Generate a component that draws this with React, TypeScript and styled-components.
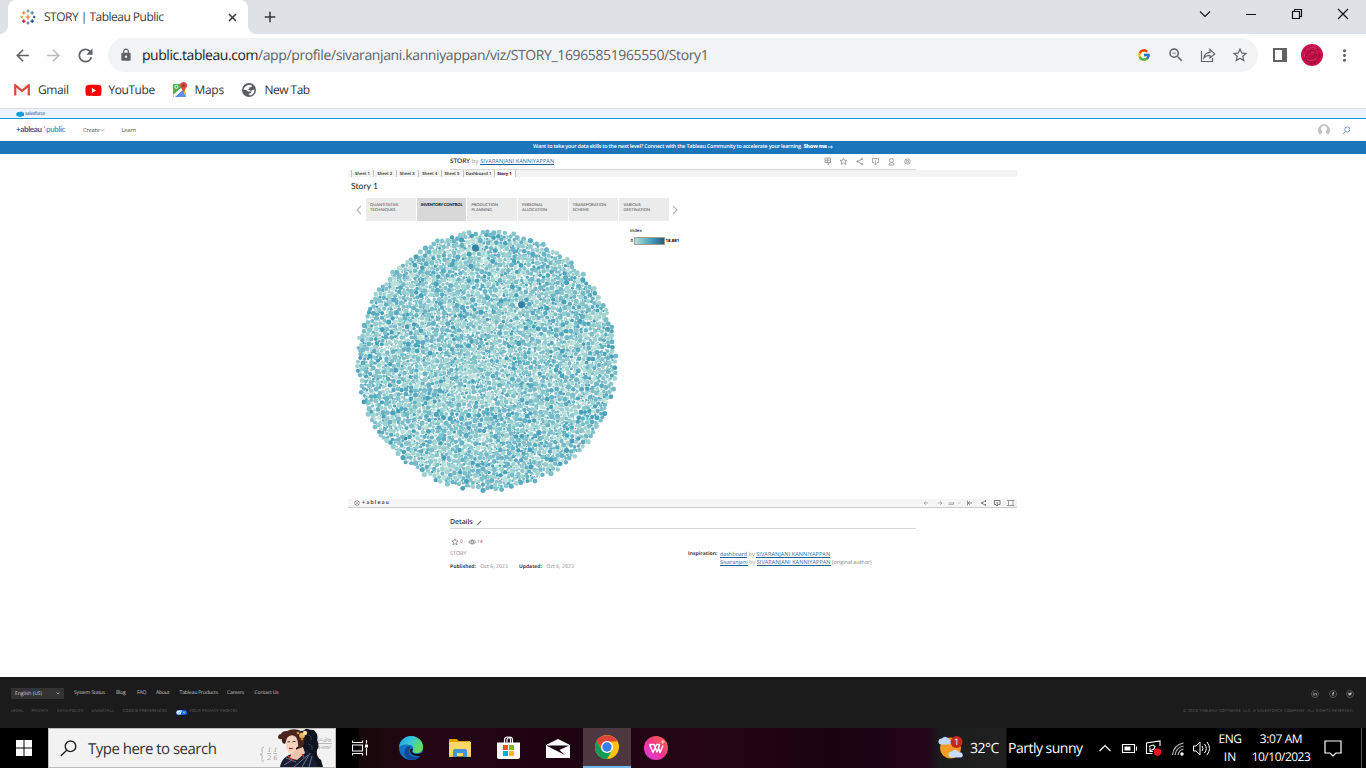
import React from "react";
import styled, { createGlobalStyle } from "styled-components";
import { MdArrowBack, MdArrowForward, MdRefresh, MdLock, MdZoomOut, MdStarBorder, MdAdd, MdMoreVert } from "react-icons/md";
import { FcGoogle } from "react-icons/fc";
import { FaYoutube, FaLinkedinIn, FaFacebookF, FaTwitter } from "react-icons/fa";

const Global = createGlobalStyle`
  * { box-sizing: border-box; }
  body { margin: 0; background: #fff; overflow: hidden; }
  svg { display: block; flex: none; }
`;

const Screen = styled.div`
  width: 1366px;
  height: 768px;
  display: flex;
  flex-direction: column;
  overflow: hidden;
  background: #fff;
  font-family: "Open Sans", "Noto Sans", sans-serif;
  text-rendering: geometricPrecision;
`;

type TextProps = { $size: number; $color?: string; $weight?: number; $track?: number; $left?: number; $width?: number; $font?: string };
const Text = styled.span<TextProps>`
  font-size: ${(p) => p.$size}px;
  color: ${(p) => p.$color ?? "#333"};
  font-weight: ${(p) => p.$weight ?? 400};
  letter-spacing: ${(p) => p.$track ?? 0}px;
  margin-left: ${(p) => p.$left ?? 0}px;
  width: ${(p) => (p.$width ? `${p.$width}px` : "auto")};
  ${(p) => (p.$font ? `font-family: "${p.$font}", sans-serif;` : "")}
  line-height: 1.2;
  white-space: nowrap;
  flex: none;
`;

const Spacer = styled.div<{ $w?: number }>`
  ${(p) => (p.$w !== undefined ? `width: ${p.$w}px; flex: none;` : "flex: 1;")}
`;

/* ---------- browser ---------- */

const TabStrip = styled.div`
  height: 34px;
  flex: none;
  display: flex;
  align-items: center;
  background: #dee1e6;
  padding-left: 8px;
`;
const Tab = styled.div`
  width: 240px;
  height: 34px;
  display: flex;
  align-items: center;
  padding: 0 11px 0 12px;
  background: #fff;
  border-radius: 8px 8px 0 0;
`;
const TabFoot = styled.div<{ $side: "left" | "right" }>`
  width: 8px;
  height: 8px;
  align-self: flex-end;
  flex: none;
  margin-left: ${(p) => (p.$side === "left" ? "-8px" : "0")};
  background: radial-gradient(circle at ${(p) => (p.$side === "left" ? "0 0" : "100% 0")}, #dee1e6 7.6px, #fff 8.2px);
`;
const Toolbar = styled.div`
  height: 42px;
  flex: none;
  display: flex;
  align-items: center;
  color: #5f6368;
  padding-left: 13px;
`;
const Address = styled.div`
  width: 1150px;
  height: 34px;
  border-radius: 17px;
  background: #f1f3f4;
  display: flex;
  align-items: center;
  padding-left: 10px;
`;
const Url = styled.div`
  display: flex;
  padding-top: 2px;
`;
const Bookmarks = styled.div`
  height: 33px;
  flex: none;
  display: flex;
  align-items: center;
  border-bottom: 1px solid #d9dbde;
  padding: 0 0 4px 14px;
`;

const TableauMark = ({ size = 16, mono }: { size?: number; mono?: boolean }) => {
  const marks: [number, number, number, string][] = [
    [8, 8, 2.4, "#e8762d"], [8, 2, 1.5, "#5b879b"], [8, 14, 1.5, "#5b6591"], [1.8, 8, 1.3, "#eb9129"], [14.2, 8, 1.3, "#1f447e"],
    [3.8, 3.9, 1.8, "#eb9129"], [12.2, 3.9, 1.8, "#59879b"], [3.8, 12.1, 1.8, "#c72035"], [12.2, 12.1, 1.8, "#1f447e"],
  ];
  return (
    <svg width={size} height={size} viewBox="0 0 16 16">
      {marks.map(([x, y, r, c], i) => (
        <path key={i} d={`M${x - r} ${y}H${x + r}M${x} ${y - r}V${y + r}`} stroke={mono ? "#555" : c} strokeWidth={1.2} />
      ))}
    </svg>
  );
};

const GmailIcon = () => (
  <svg width="16" height="12" viewBox="0 0 16 12">
    <path d="M1 1h14v10H1z" fill="#f1f1f1" />
    <path d="M1.2 11.5V1.3L8 6.8l6.8-5.5v10.2" fill="none" stroke="#d54b3d" strokeWidth="2.2" />
  </svg>
);
const MapsIcon = () => (
  <svg width="16" height="16" viewBox="0 0 16 16">
    <path d="M1 2h12v13H2Q1 15 1 14z" fill="#4caf50" />
    <path d="M2 15 10 7l4 4v4z" fill="#4285f4" />
    <path d="m1 13 9-8 2 2-9 8H2z" fill="#fff" />
    <path d="m5 15 5-5 4 5z" fill="#5b93ef" />
    <path d="m10 8 2-1 2 5v3z" fill="#fbc02d" />
    <circle cx="4.4" cy="4.8" r="1.6" fill="none" stroke="#fff" strokeWidth=".9" />
    <path d="M11.5 0A3.6 3.6 0 0 1 15 3.7C15 6 12.4 7 11.6 11 10.8 7 8 6 8 3.6A3.6 3.6 0 0 1 11.5 0z" fill="#dd4b3e" />
    <circle cx="11.5" cy="3.6" r="1.2" fill="#8c2a22" />
  </svg>
);
const GlobeIcon = () => (
  <svg width="14" height="14" viewBox="0 0 14 14">
    <circle cx="7" cy="7" r="7" fill="#5a5e63" />
    <path d="M5.5 2.2C7.5 1.6 9 1.9 10 2.6L9.5 4 7.5 4.2 7 5.7 5.5 6.5 8 7l1 1.5H6L4.5 7 1.6 6.7C1.8 4.5 3.4 2.8 5.5 2.2zM9.5 7.500l3-1c.2 3-1.500 5.300-4.500 5.900L6.500 11l2.500-1z" fill="#fff" />
  </svg>
);

const WindowButtons = () => (
  <svg width="160" height="34" viewBox="1198 0 160 34" fill="none" stroke="#111">
    <path d="m1200 11.5 5 5 5-5" strokeWidth="1.1" />
    <path d="M1246 14.5h10" />
    <path d="M1292.5 11.5h7v7h-7zM1294.5 11.5v-2h7v7h-2" strokeWidth="1.2" />
    <path d="m1338 9 10 10M1348 9l-10 10" strokeWidth="1.2" />
  </svg>
);

const ShareIcon = () => (
  <svg width="16" height="16" viewBox="0 0 16 16" fill="none" stroke="#5f6368" strokeWidth="1.2">
    <path d="M1.5 4v10.5h11V11" />
    <path d="M4 11c.3-4 2.6-5.6 6-5.7V2.5l4.7 4.4L10 11V8.5C7.5 8.3 5.6 9 4 11z" />
  </svg>
);
const PanelIcon = () => (
  <svg width="14" height="14" viewBox="0 0 14 14">
    <path d="M0 0h14v14H0z" fill="#5f6368" />
    <path d="M2 2h7v10H2z" fill="#fff" />
  </svg>
);
const RoseAvatar = () => (
  <svg width="22" height="22" viewBox="0 0 22 22">
    <circle cx="11" cy="11" r="11" fill="#c8124a" />
    <g fill="none" stroke="#8d0a35" strokeWidth=".9">
      <path d="M9 9c2-2 5-1 5 1s-3 3-5 2M6 12c0-5 5-7 9-4M7 14c4 2 8 0 9-4" />
      <path d="M3 7c4-4 10-4 15-1M2 14c3 4 8 4 12 3M18 9c1 3 0 6-3 8M4 11c0 3 2 5 4 6M8 20c3 0 5-1 7-2" />
    </g>
    <path d="M5 6c3-3 8-3 11-1M6 15.500c3 2 7 1 9-1M10 8.500c2-1 3-.5 3.500.5M3 10l1 3" fill="none" stroke="#ec3568" strokeWidth=".9" />
  </svg>
);

const Browser = () => (
  <>
    <TabStrip>
      <TabFoot $side="left" />
      <Tab>
        <TableauMark />
        <Text $size={12} $left={8} $color="#3c4043" $track={-0.51}>STORY | Tableau Public</Text>
        <Spacer />
        <svg width="9" height="9" viewBox="0 0 9 9"><path d="m1 1 7 7M8 1 1 8" stroke="#3c4043" strokeWidth="1.6" /></svg>
      </Tab>
      <TabFoot $side="right" />
      <Spacer $w={5} />
      <MdAdd size={18} color="#34373a" />
      <Spacer />
      <WindowButtons />
      <Spacer $w={8} />
    </TabStrip>
    <Toolbar>
      <MdArrowBack size={19} />
      <Spacer $w={12} />
      <MdArrowForward size={19} color="#babcbe" />
      <Spacer $w={12} />
      <MdRefresh size={21} />
      <Spacer $w={12} />
      <Address>
        <Spacer $w={1} />
        <MdLock size={14} />
        <Url>
          <Text $size={14} $left={9} $color="#202124" $track={-0.45}>public.tableau.com</Text>
          <Text $size={14} $color="#5f6368" $track={-0.38}>/app/profile/sivaranjani.kanniyappan/viz/STORY_16965851965550/Story1</Text>
        </Url>
        <Spacer />
        <FcGoogle size={14} />
        <Spacer $w={16} />
        <MdZoomOut size={18} />
        <Spacer $w={15} />
        <ShareIcon />
        <Spacer $w={15} />
        <MdStarBorder size={18} />
        <Spacer $w={9} />
      </Address>
      <Spacer $w={15} />
      <PanelIcon />
      <Spacer $w={14} />
      <RoseAvatar />
      <Spacer $w={12} />
      <MdMoreVert size={19} />
    </Toolbar>
    <Bookmarks>
      <GmailIcon />
      <Text $size={12} $left={8} $width={46.5} $track={-0.4}>Gmail</Text>
      <FaYoutube size={17} color="#f00" />
      <Text $size={12} $left={7} $width={63} $track={-0.45}>YouTube</Text>
      <MapsIcon />
      <Text $size={12} $left={7} $width={47} $track={-0.3}>Maps</Text>
      <GlobeIcon />
      <Text $size={12} $left={9} $track={-0.52}>New Tab</Text>
    </Bookmarks>
  </>
);

/* ---------- site header ---------- */

const SalesforceBar = styled.div`
  height: 10px;
  flex: none;
  display: flex;
  align-items: center;
  padding-left: 16px;
  background: #ecf3fe;
  border-bottom: 1px solid #0d9dda;
`;
const SiteNav = styled.div`
  height: 22px;
  flex: none;
  display: flex;
  align-items: center;
  padding: 0 15px 0 16px;
`;
const Banner = styled.div`
  height: 13px;
  flex: none;
  display: flex;
  align-items: center;
  justify-content: center;
  padding-bottom: 2px;
  background: #1b75bb;
`;

const SiteHeader = () => (
  <>
    <SalesforceBar>
      <svg width="8" height="6" viewBox="0 0 8 6"><path d="M1.5 5A1.8 1.8 0 0 1 1.5 1.5 2 2 0 0 1 4 1a1.7 1.7 0 0 1 2.5.5A1.8 1.8 0 1 1 6.5 5 4 4 0 0 1 1.5 5z" fill="#0d9dda" /></svg>
      <Text $size={5} $left={1} $color="#5f84aa" $weight={600} $track={-0.45}>salesforce</Text>
    </SalesforceBar>
    <SiteNav>
      <Text $size={8} $color="#3d5e92" $weight={700} $track={-0.35} $width={27} $font="Lato">+ableau</Text>
      <svg width="3" height="8" viewBox="0 0 3 8"><path d="M1.5 0v2M.5 1h2M2 3v2" stroke="#e58c8c" strokeWidth=".6" /></svg>
      <Text $size={8} $color="#5a9fd0" $weight={700} $track={-0.4} $width={37} $font="Lato">public</Text>
      <Text $size={5.5} $color="#444" $weight={500}>Create</Text>
      <svg width="5" height="4" viewBox="0 0 5 4"><path d="m.5 1 2 2 2-2" fill="none" stroke="#777" strokeWidth=".6" /></svg>
      <Text $size={5.5} $left={16.5} $color="#444" $weight={500}>Learn</Text>
      <Spacer />
      <svg width="12" height="12" viewBox="0 0 12 12"><path d="M1.9 10.5A6 6 0 1 1 10.1 10.5L8 9V7a3 3 0 1 0-4 0v2z" fill="#c1c1c1" /></svg>
      <Spacer $w={12} />
      <svg width="9" height="9" viewBox="0 0 9 9" fill="none" stroke="#6d8fc4" strokeWidth=".9"><circle cx="5.3" cy="3.5" r="2.6" /><path d="M3.4 5.4.6 8.3" /></svg>
    </SiteNav>
    <Banner>
      <Text $size={5.4} $color="#fff" $weight={600} $track={-0.21}>Want to take your data skills to the next level? Connect with the Tableau Community to accelerate your learning.</Text>
      <Text $size={5.4} $left={1.5} $color="#fff" $weight={800} $track={-0.25}>Show me</Text>
      <svg width="6" height="4" viewBox="0 0 6 4"><path d="M1 2h4M4 .8 5.5 2 4 3.2" fill="none" stroke="#fff" strokeWidth=".8" /></svg>
    </Banner>
  </>
);

/* ---------- workbook ---------- */

const Main = styled.main`
  height: 523px;
  flex: none;
  display: flex;
  flex-direction: column;
  align-items: center;
`;
const Heading = styled.div<{ $h: number; $top?: number }>`
  width: 466px;
  height: ${(p) => p.$h}px;
  flex: none;
  display: flex;
  align-items: center;
  padding-top: ${(p) => p.$top ?? 0}px;
  border-bottom: 1px solid #d8d8d8;
`;
const UserLink = styled(Text)`
  font-weight: 500;
  line-height: 6px;
  border-bottom: 1px solid #1f5f98;
`;
const Viz = styled.section`
  width: 669px;
  height: 338px;
  margin-right: 1px;
  flex: none;
  display: flex;
  flex-direction: column;
`;
const SheetTabs = styled.div`
  height: 7px;
  flex: none;
  display: flex;
  background: #f4f4f4;
  padding-left: 3px;
`;
const SheetTab = styled.div<{ $w: number; $active?: boolean }>`
  width: ${(p) => p.$w}px;
  padding-top: 2px;
  display: flex;
  align-items: center;
  justify-content: center;
  border-left: 1px solid #c2c2c2;
  ${(p) => (p.$active ? "border-right: 1px solid #c2c2c2; background: #fff;" : "")}
`;
const StoryTitle = styled.div`
  height: 21px;
  flex: none;
  display: flex;
  align-items: center;
  padding: 0 0 3px 3px;
`;
const StoryPoints = styled.div`
  height: 23px;
  flex: none;
  display: flex;
  align-items: center;
  padding-left: 8px;
`;
const Points = styled.div`
  display: flex;
  gap: 1px;
  margin: 0 3px 0 4px;
`;
const Point = styled.div<{ $active?: boolean }>`
  width: 49.7px;
  height: 23px;
  padding: 4px 0 0 4px;
  background: ${(p) => (p.$active ? "#d8d8d8" : "#ebebeb")};
  color: ${(p) => (p.$active ? "#111" : "#444")};
  font-family: Lato, sans-serif;
  font-weight: ${(p) => (p.$active ? 900 : 400)};
  font-size: 4px;
  letter-spacing: ${(p) => (p.$active ? "-0.08px" : "0.03px")};
  line-height: 5px;
  white-space: pre;
`;
const Canvas = styled.div`
  height: 278px;
  flex: none;
  display: flex;
`;
const Legend = styled.div`
  padding: 8px 0 0 2px;
  display: flex;
  flex-direction: column;
`;
const LegendScale = styled.div`
  display: flex;
  align-items: center;
  margin-top: 3px;
`;
const Ramp = styled.div`
  width: 31px;
  height: 8px;
  border: 1px solid #a39c8b;
  background: linear-gradient(90deg, #b5dfd6, #45a0ba 55%, #295b86);
`;
const VizToolbar = styled.div`
  height: 9px;
  flex: none;
  display: flex;
  align-items: center;
  background: #f5f5f5;
  border-bottom: 1px solid #cbcbcb;
  padding-left: 6px;
`;
const Details = styled.div`
  width: 466px;
  display: flex;
  justify-content: space-between;
`;
const DetailColumn = styled.div<{ $w: number; $top: number }>`
  width: ${(p) => p.$w}px;
  padding-top: ${(p) => p.$top}px;
`;
const Line = styled.div<{ $h: number }>`
  height: ${(p) => p.$h}px;
  display: flex;
  align-items: center;
`;

type Bubble = { x: number; y: number; r: number; fill: string };

const SHADES = ["#b9e0d8", "#9fd3d0", "#9fd3d0", "#93cbcf", "#86c5cc", "#7bbfc9", "#74b9c7", "#67b2c4", "#58abc0", "#48a2ba"];

function packBubbles(): Bubble[] {
  let seed = 20231;
  const rand = () => {
    seed = (seed * 1664525 + 1013904223) % 4294967296;
    return seed / 4294967296;
  };
  const cx = 138.7, cy = 139.9, R = 132.6, cell = 6;
  const grid = new Map<number, Bubble[]>();
  const out: Bubble[] = [];
  const add = (b: Bubble) => {
    const key = Math.floor(b.x / cell) * 1000 + Math.floor(b.y / cell);
    grid.set(key, [...(grid.get(key) ?? []), b]);
    out.push(b);
  };
  const fits = (x: number, y: number, r: number) => {
    const gx = Math.floor(x / cell), gy = Math.floor(y / cell);
    for (let i = gx - 1; i <= gx + 1; i++)
      for (let j = gy - 1; j <= gy + 1; j++)
        for (const b of grid.get(i * 1000 + j) ?? []) {
          if (Math.hypot(b.x - x, b.y - y) < (b.r + r) * 0.84) return false;
        }
    return true;
  };
  add({ x: 127.6, y: 27, r: 3.8, fill: "#3684a6" });
  add({ x: 173.7, y: 83.7, r: 3.7, fill: "#347fa3" });
  add({ x: 57.5, y: 217.5, r: 1.9, fill: "#3684a6" });
  for (let i = 0; i < 900; i++) {
    const a = rand() * Math.PI * 2, d = R - 2.6 - rand() * 4.4;
    const x = cx + Math.cos(a) * d, y = cy + Math.sin(a) * d, r = 2 + rand() * 0.7;
    if (fits(x, y, r)) add({ x, y, r, fill: SHADES[1 + Math.floor(rand() * 9)] });
  }
  // Large bubbles gather towards the rim, fine ones fill the middle.
  const passes: [number, number, number][] = [[2.7, 2.1, 4500], [2.2, 1.6, 8000], [1.7, 1.2, 20000], [1.2, 0.7, 40000]];
  for (const [hi, lo, tries] of passes)
    for (let i = 0; i < tries; i++) {
      const a = rand() * Math.PI * 2, d = Math.pow(rand(), lo > 1.5 ? 0.4 : 0.5) * (R - 5);
      const x = cx + Math.cos(a) * d, y = cy + Math.sin(a) * d, r = lo + rand() * (hi - lo);
      if (fits(x, y, r)) add({ x, y, r, fill: SHADES[Math.floor(rand() * 10)] });
    }
  return out;
}
const BUBBLES = packBubbles();

const BubbleChart = () => (
  <svg width="280" height="278" viewBox="0 0 280 278">
    {BUBBLES.map((b, i) => (
      <circle key={i} cx={b.x.toFixed(1)} cy={b.y.toFixed(1)} r={b.r.toFixed(2)} fill={b.fill} />
    ))}
  </svg>
);

const HeadingActions = () => (
  <svg width="92" height="9" viewBox="0 0 92 9" fill="none" stroke="#909090" strokeWidth=".8">
    <path d="M1 1h5.5v4.5H1zM1 3.2h5.5M3.7 1v4.5M4 8l1-2 2-2" />
    <path d="m19.5 1 1 2.2 2.5.2-1.9 1.6.7 2.5-2.3-1.3-2.3 1.3.7-2.5L16 3.4l2.5-.2z" />
    <path d="M38 2 33.5 4.500l4.500 2.500" /><circle cx="38" cy="2" r=".8" /><circle cx="33.5" cy="4.5" r=".7" /><circle cx="38" cy="7" r=".8" />
    <path d="M50 5.5h-1.5v-4h6v4H53M51.5 3.5V8m-1.3-1.4 1.3 1.4 1.3-1.4" />
    <circle cx="67.5" cy="3.5" r="2" /><path d="M65 8q0-2.5 2.5-2.5T70 8z" />
    <circle cx="83.5" cy="4.5" r="2.7" /><circle cx="83.5" cy="4.5" r="1.2" />
  </svg>
);

const VizActions = () => (
  <svg width="95" height="8" viewBox="0 0 95 8" fill="none" stroke="#a3a3a3" strokeWidth=".8">
    <path d="M6 4H2m2-1.8L2 4l2 1.8M16 4h4m-2-1.8L20 4l-2 1.8M26.5 4h5m-5 1.500h5V3" />
    <path d="m36 3.5 1 1 1-1" />
    <path d="M45.5 1.5v5M50 4h-4m2-1.800L46 4l2 1.800" stroke="#777" />
    <path d="M63 2 59.500 4l3.500 2M63.500 1v2M63.500 5v2M59 4h1.500" stroke="#666" />
    <path d="M74 5.500h-1.500v-4H78v4h-1.500M75.200 3v4M74 5.800 75.200 7l1.200-1.200" stroke="#555" />
    <path d="M85 1.500h7.500M85 6.500h7.500M86.500 1.500v5M91 1.500v5" stroke="#888" />
  </svg>
);

const Chevron = ({ right }: { right?: boolean }) => (
  <svg width="6" height="10" viewBox="0 0 6 10"><path d={right ? "m1 1 4 4-4 4" : "M5 1 1 5l4 4"} fill="none" stroke="#b5b5b5" strokeWidth="1.1" /></svg>
);

const SHEETS: [string, number][] = [["Sheet 1", 22], ["Sheet 2", 22.5], ["Sheet 3", 22.5], ["Sheet 4", 22.5], ["Sheet 5", 22], ["Dashboard 1", 31]];
const POINTS = ["QUANTITATIVE\nTECHNIQUES", "INVENTORY CONTROL", "PRODUCTION\nPLANNING", "PERSONAL\nALLOCATION", "TRANSPORATION\nSCHEME", "VARIOUS\nDESTINATION"];

const Workbook = () => (
  <Main>
    <Heading $h={16}>
      <Text $size={6.3} $weight={700} $color="#444" $font="Lato">STORY</Text>
      <Text $size={5.5} $left={2} $color="#888">by</Text>
      <UserLink $size={5.5} $left={2} $color="#30699f" $track={0.09}>SIVARANJANI KANNIYAPPAN</UserLink>
      <Spacer />
      <HeadingActions />
    </Heading>
    <Viz>
      <SheetTabs>
        {SHEETS.map(([name, w]) => (
          <SheetTab key={name} $w={w}><Text $size={4.2} $weight={600} $color="#222">{name}</Text></SheetTab>
        ))}
        <SheetTab $w={22} $active><Text $size={4.2} $weight={700} $color="#000">Story 1</Text></SheetTab>
      </SheetTabs>
      <StoryTitle><Text $size={8.6} $color="#222" $font="Lato">Story 1</Text></StoryTitle>
      <StoryPoints>
        <Chevron />
        <Points>{POINTS.map((p, i) => <Point key={p} $active={i === 1}>{p}</Point>)}</Points>
        <Chevron right />
      </StoryPoints>
      <Canvas>
        <BubbleChart />
        <Legend>
          <Text $size={4.4} $weight={600} $color="#222">Index</Text>
          <LegendScale>
            <Text $size={4.4} $weight={600} $color="#111" $width={3.5} $left={0.5}>0</Text>
            <Ramp />
            <Text $size={4.4} $weight={700} $color="#111" $left={0.5}>18,881</Text>
          </LegendScale>
        </Legend>
      </Canvas>
      <VizToolbar>
        <TableauMark size={6} mono />
        <Text $size={5.5} $left={2} $color="#444" $weight={700} $track={1.25} $font="Lato">+ableau</Text>
        <Spacer />
        <VizActions />
      </VizToolbar>
    </Viz>
    <Heading $h={21} $top={10}>
      <Text $size={7} $color="#333" $weight={600} $track={-0.1}>Details</Text>
      <Spacer $w={3} />
      <svg width="6" height="6" viewBox="0 0 6 6"><path d="m.5 5.500 1-1.800L4.800.5l.8.8-3.300 3.400z" fill="#777" /></svg>
    </Heading>
    <Details>
      <DetailColumn $w={230} $top={8}>
        <Line $h={9}>
          <svg width="10" height="8" viewBox="0 0 10 8" fill="none" stroke="#777" strokeWidth=".7">
            <path d="m5 .8.9 2 2.3.2-1.7 1.5.5 2.3-2-1.2-2 1.2.5-2.3L1.8 3l2.3-.2z" />
          </svg>
          <Text $size={5} $color="#a66" $width={8}>0</Text>
          <svg width="9" height="8" viewBox="0 0 9 8" fill="none" stroke="#777" strokeWidth=".8">
            <path d="M.7 4q3.500-4 7 0-3.500 4-7 0z" /><circle cx="4.2" cy="4" r="1.3" />
          </svg>
          <Text $size={5} $color="#a66">14</Text>
        </Line>
        <Line $h={15}><Text $size={5.4} $color="#a08c84">STORY</Text></Line>
        <Line $h={11}>
          <Text $size={5} $weight={700} $color="#444" $width={30.5}>Published:</Text>
          <Text $size={5} $color="#777" $width={38.5} $track={0.1}>Oct 6, 2023</Text>
          <Text $size={5} $weight={700} $color="#444" $width={27.5}>Updated:</Text>
          <Text $size={5} $color="#777" $track={0.1}>Oct 6, 2023</Text>
        </Line>
      </DetailColumn>
      <DetailColumn $w={228} $top={21}>
        <Line $h={8}>
          <Text $size={5.1} $weight={700} $color="#444" $width={32}>Inspiration:</Text>
          <UserLink $size={5.5} $color="#30699f" $track={-0.07}>dashboard</UserLink>
          <Text $size={5.5} $color="#999" $left={1.5}>by</Text>
          <UserLink $size={5.5} $left={1.5} $color="#30699f" $track={0.09}>SIVARANJANI KANNIYAPPAN</UserLink>
        </Line>
        <Line $h={8}>
          <UserLink $size={5.5} $left={32} $color="#30699f" $track={-0.05}>Sivaranjani</UserLink>
          <Text $size={5.5} $color="#999" $left={1.5}>by</Text>
          <UserLink $size={5.5} $left={1.5} $color="#30699f" $track={0.09}>SIVARANJANI KANNIYAPPAN</UserLink>
          <Text $size={5.5} $color="#888" $left={1.5} $track={-0.1}>(original author)</Text>
        </Line>
      </DetailColumn>
    </Details>
  </Main>
);

/* ---------- footer ---------- */

const Footer = styled.footer`
  height: 51px;
  flex: none;
  background: #1b1b1b;
  padding: 11px 12px 0 11px;
`;
const FooterRow = styled.div<{ $h: number; $top?: number }>`
  height: ${(p) => p.$h}px;
  padding-top: ${(p) => p.$top ?? 0}px;
  display: flex;
  align-items: center;
`;
const LanguageSelect = styled.div`
  width: 53px;
  height: 11px;
  display: flex;
  align-items: center;
  justify-content: space-between;
  padding: 0 4px;
  background: #333;
`;
const Social = styled.div`
  width: 8px;
  height: 8px;
  margin-left: 9.3px;
  border: 1px solid #555;
  border-radius: 50%;
  display: flex;
  align-items: center;
  justify-content: center;
`;
const LINKS: [string, number][] = [["System Status", 42], ["Blog", 21], ["FAQ", 19], ["About", 23.5], ["Tableau Products", 47.5], ["Careers", 27.5], ["Contact Us", 30]];
const LEGAL: [string, number][] = [["LEGAL", 20.5], ["PRIVACY", 25.5], ["DATA POLICY", 34.5], ["UNINSTALL", 31], ["COOKIE PREFERENCES", 53.5]];

const SiteFooter = () => (
  <Footer>
    <FooterRow $h={11}>
      <LanguageSelect>
        <Text $size={5.2} $color="#ccc" $track={-0.1}>English (US)</Text>
        <svg width="4" height="3" viewBox="0 0 4 3"><path d="m.5.5 1.500 1.500L3.500.5" fill="none" stroke="#ccc" strokeWidth=".7" /></svg>
      </LanguageSelect>
      <Spacer $w={10} />
      {LINKS.map(([t, w]) => <Text key={t} $size={5.1} $color="#c4c4c4" $track={-0.18} $width={w}>{t}</Text>)}
      <Spacer />
      <Social><FaLinkedinIn size={4} color="#aaa" /></Social>
      <Social><FaFacebookF size={4} color="#ccc" /></Social>
      <Social><FaTwitter size={4} color="#ccc" /></Social>
    </FooterRow>
    <FooterRow $h={24} $top={2}>
      {LEGAL.map(([t, w]) => <Text key={t} $size={4} $color="#666" $track={0.18} $width={w}>{t}</Text>)}
      <svg width="11" height="5" viewBox="0 0 11 5"><rect width="11" height="5" rx="2.5" fill="#0b62f5" /><path d="M2.500.5H6L4.500 4.500h-2a2 2 0 0 1 0-4z" fill="#fff" /><path d="m2 2.500 1 1 1.500-2" stroke="#06f" fill="none" strokeWidth=".7" /><path d="m7 1.500 2 2m0-2-2 2" stroke="#fff" strokeWidth=".6" /></svg>
      <Text $size={4} $left={2.5} $color="#666" $track={0.15}>YOUR PRIVACY CHOICES</Text>
      <Spacer />
      <Text $size={4} $color="#626262" $track={0.2}>© 2023 TABLEAU SOFTWARE, LLC, A SALESFORCE COMPANY. ALL RIGHTS RESERVED.</Text>
    </FooterRow>
  </Footer>
);

/* ---------- taskbar ---------- */

const Taskbar = styled.div`
  height: 40px;
  flex: none;
  display: flex;
  align-items: center;
  background: linear-gradient(90deg, #000 358px, #180909 359px, #240613 420px, #1d0311 560px, #250515 700px, #1a0310 830px, #21051a 928px, #1b1c1c 940px, #202020 1006px, #000 1007px);
`;
const SearchBox = styled.div`
  width: 288px;
  height: 40px;
  display: flex;
  align-items: center;
  padding-left: 10px;
  background: #f2f2f2;
  border: 1px solid #bdbdbd;
`;
const AppSlot = styled.div<{ $active?: boolean }>`
  width: 48px;
  height: 40px;
  display: flex;
  align-items: center;
  justify-content: center;
  flex: none;
  ${(p) => (p.$active ? "background: #4d3842; border-bottom: 2px solid #76b9ed;" : "")}
`;
const Lowered = styled.div<{ $by: number }>`
  display: flex;
  flex: none;
  padding-top: ${(p) => p.$by}px;
`;
const Stack = styled.div<{ $w: number }>`
  width: ${(p) => p.$w}px;
  display: flex;
  flex-direction: column;
  align-items: center;
  gap: 3px;
`;

const Portrait = () => (
  <svg width="78" height="38" viewBox="258 729 78 38">
    <g fill="none" stroke="#aaa" strokeWidth=".8">
      <path d="M265 747q-3 0-2 4t-2 3q3 0 2 4t2 3M268 753.5h4M274 753.5h4M317 743.5h16" />
    </g>
    <g fontFamily="Liberation Serif, serif" fontSize="7" fill="#999" fontStyle="italic">
      <text x="268.5" y="752">1</text><text x="268.5" y="760">2</text><text x="274.5" y="752">1</text><text x="274.5" y="760">6</text>
      <text x="318" y="742" fontSize="6">x²-d²n</text><text x="317" y="749" fontSize="6">m-em²</text>
    </g>
    <path d="M302 731q4 0 5-3 2 2 8 2 5 5 3 10 3 6 0 10-1 7 4 10l2 7h-26l-3-18z" fill="#11141f" />
    <path d="M281 767q1-8 9-12l12-6 11 4 6 14z" fill="#171c2e" />
    <path d="M288 739q-1 4-1 8 1 4 5 8 3 1 5-1v-6l8-6-3-9-9-1z" fill="#f6d3bf" />
    <path d="M279 738q0-4 3-4 1-3 6-3 5-3 12-1l6 4-1 10q-2 5-6 6 1-8-2-13-5-4-9 1-1 4-2 6-4-1-3-5-2 1-4-1z" fill="#4a241f" />
    <path d="M296 750l8-3 2 6-8 7-8-2z" fill="#f0c3ac" />
    <path d="M288.500 742l2.500-.4m2.500.2 3-.4" stroke="#402622" />
    <path d="M290 748.500h3.500" stroke="#a61f23" strokeWidth="1.2" />
    <path d="M287 758l10 4m-12 3 8-5m2 7 14-12m-6 12 8-14m-1 14 3-11" stroke="#7e9fca" strokeWidth=".7" />
    <path d="M289 756l5 5m9-7 2 4" stroke="#d53030" strokeWidth="1.2" />
    <circle cx="303" cy="735.5" r="2.8" fill="#e9b964" /><circle cx="306" cy="733" r="2.2" fill="#f7dca0" /><circle cx="303" cy="739" r="1.4" fill="#c87a2c" /><circle cx="299" cy="733" r="1.3" fill="#d89444" />
    <path d="M309 735q4 1 3 5m-3 4q5 1 4 6" fill="none" stroke="#3a4668" strokeWidth=".9" />
  </svg>
);

const TaskViewIcon = () => (
  <svg width="16" height="16" viewBox="0 0 16 16" fill="none" stroke="#fff" strokeWidth="1.1">
    <path d="M.5.5v2h10v-2M.5 15.500v-2h10v2M.5 5h10v6H.5zM14.500 0v3.500M14.500 8v7.500" /><path d="M13 4.500h3v3h-3z" fill="#fff" stroke="none" />
  </svg>
);
const EdgeIcon = () => (
  <svg width="24" height="24" viewBox="0 0 24 24">
    <defs><linearGradient id="edgeTop" x1="0" y1="0" x2="1" y2=".4"><stop offset="0" stopColor="#239fe2" /><stop offset=".55" stopColor="#35c9d8" /><stop offset="1" stopColor="#67df5c" /></linearGradient></defs>
    <circle cx="12" cy="12" r="12" fill="#1272c6" />
    <path d="M0 11C1 4 6 0 12 0c7 0 12 5 12 11 0 4-3 6-6 6-4 0-5-1-4-3 1-3-1-5-4-5C6 8 2 9 0 11z" fill="url(#edgeTop)" />
    <path d="M9 10c-6 4-4 12 2 14 4 1 8-1 11-4-6 3-12 0-12-4 0-3 1-4 2-5z" fill="#0b4b98" />
    <path d="M14 13c-2 3 0 5 4 5 3 0 5-1 6-3l-1.500 4.500C17 21.500 11.500 19 11 15c0-1.500 1-3 3-2z" fill="#240613" />
    <path d="M22 20c-5 2-11 0-12-4 1.500 4.500 7 6 12 4z" fill="#0b4b98" />
  </svg>
);
const FolderIcon = () => (
  <svg width="22" height="18" viewBox="0 0 22 18">
    <path d="M0 0h8l1.500 2H21v5H0z" fill="#e0a100" /><path d="M0 3h22v14.500H0z" fill="#ffd868" /><path d="M4 18v-6q0-2 2-2h10q2 0 2 2v6h-4v-4H8v4z" fill="#3f96d8" /><path d="M0 16.500h4V18H0zM18 16.500h4V18h-4z" fill="#e8bd4e" />
  </svg>
);
const StoreIcon = () => (
  <svg width="24" height="24" viewBox="0 0 24 24">
    <path d="M8.500 7V4q0-3 3-3t3 3v3M11 7V3.500q1-2.500 3-2.500 2.500 0 2.500 3v3" fill="none" stroke="#fff" strokeWidth="1.2" />
    <path d="M1 6.500h23V21q0 2-2 2H3q-2 0-2-2z" fill="#fff" />
    <path d="M7 9h5v5H7z" fill="#f25022" /><path d="M13 9h5v5h-5z" fill="#7fba00" /><path d="M7 15h5v5H7z" fill="#00a4ef" /><path d="M13 15h5v5h-5z" fill="#ffb900" />
  </svg>
);
const MailIcon = () => (
  <svg width="24" height="19" viewBox="0 0 24 19">
    <path d="M0 6 12 0l12 6v13H0z" fill="#fff" /><path d="M1 6.500h22L13.500 11l5.500 5L1 7z" fill="#1d0311" />
  </svg>
);
const ChromeIcon = () => (
  <svg width="24" height="24" viewBox="0 0 24 24">
    <circle cx="12" cy="12" r="12" fill="#fbc116" />
    <path d="M1.6 6A12 12 0 0 0 12 24l5-9H7z" fill="#109d58" /><path d="M12 6h10.400L17 14z" fill="#fbc116" /><path d="M1.600 6A12 12 0 0 1 22.400 6.500H12L7 14z" fill="#db4437" />
    <circle cx="12" cy="12" r="6" fill="#fff" /><circle cx="12" cy="12" r="4.7" fill="#337df0" />
  </svg>
);
const WpsIcon = () => (
  <svg width="24" height="24" viewBox="0 0 24 24">
    <defs><linearGradient id="wps" x1="0" y1="1" x2="1" y2="0"><stop offset="0" stopColor="#d83ef4" /><stop offset=".5" stopColor="#f3358d" /><stop offset="1" stopColor="#ff6b35" /></linearGradient></defs>
    <circle cx="12" cy="12" r="12" fill="url(#wps)" />
    <path d="M5.500 8.500h4.500l3 7.500 1.500-3.500M5.500 8.500 9 16.500l3.500-8h3l-1 3.500 1.500 4.500 3-7" fill="none" stroke="#fff" strokeWidth="1.5" strokeLinejoin="round" /><path d="M18.800 4v4M16.800 6h4" stroke="#fff" strokeWidth=".7" />
  </svg>
);
const WeatherIcon = () => (
  <svg width="26" height="24" viewBox="0 0 26 24">
    <circle cx="12.5" cy="12" r="10.5" fill="#f39b24" />
    <path d="M3 8.500a3 3 0 0 1 1-6 4 4 0 0 1 7 1 2.500 2.500 0 0 1 0 5z" fill="#bdd6fb" /><path d="M13 21.500a3 3 0 0 1 1-6 4 4 0 0 1 7 1 2.500 2.500 0 0 1 2 5z" fill="#c9ddfb" />
    <circle cx="18.5" cy="6" r="6" fill="#c42b1c" /><text x="18.5" y="9" fill="#fff" fontSize="9" textAnchor="middle">1</text>
  </svg>
);
const TrayIcons = () => (
  <svg width="114" height="24" viewBox="1098 736 114 24" fill="none" stroke="#fff" strokeWidth="1.2">
    <path d="m1099.500 751 5.500-5.500 5.500 5.500" />
    <path d="M1122.500 744.500h12v8h-12z" /><path d="M1124.500 746.500h6v4h-6zM1136 746.500h1v4h-1z" fill="#fff" stroke="none" />
    <path d="M1160 746v-5l-13.500 2v10.500h6M1149 746.500l4-1.500 2 1.500-1 2.500-3.500 1.500M1150 747.500v4h3" strokeWidth="1.1" /><circle cx="1157.5" cy="752" r="3.7" fill="#e81123" stroke="none" />
    <g stroke="#bbb"><path d="M1172.500 755q1-10 11-12M1175 755q1-7.500 8.500-9M1178 755q1-5 5.500-6" /></g><circle cx="1182" cy="754" r="1.7" fill="#fff" stroke="none" />
    <path d="M1193.500 746h2.500l4-4v13l-4-4h-2.500zM1202 746q2 2.500 0 5M1204.500 744q3.500 4.500 0 9M1207 742q5 6.500 0 13" strokeWidth="1" />
  </svg>
);

const WindowsTaskbar = () => (
  <Taskbar>
    <AppSlot>
      <svg width="16" height="16" viewBox="0 0 16 16"><path d="M0 0h7.500v7.500H0zM8.500 0H16v7.500H8.500zM0 8.500h7.500V16H0zM8.500 8.500H16V16H8.500z" fill="#fff" /></svg>
    </AppSlot>
    <SearchBox>
      <Spacer $w={1} />
      <svg width="17" height="17" viewBox="0 0 17 17" fill="none" stroke="#222" strokeWidth="1.4"><circle cx="10.5" cy="6.3" r="5.3" /><path d="M6.700 10.300.8 16" /></svg>
      <Lowered $by={1}><Text $size={15} $left={11} $color="#333" $track={-0.51}>Type here to search</Text></Lowered>
      <Spacer />
      <Portrait />
    </SearchBox>
    <AppSlot><TaskViewIcon /></AppSlot>
    <Spacer $w={3} />
    <AppSlot><EdgeIcon /></AppSlot>
    <Spacer $w={1} />
    <AppSlot><FolderIcon /></AppSlot>
    <AppSlot><StoreIcon /></AppSlot>
    <Spacer $w={2} />
    <AppSlot><MailIcon /></AppSlot>
    <Spacer $w={1} />
    <AppSlot $active><ChromeIcon /></AppSlot>
    <Spacer $w={1} />
    <AppSlot><WpsIcon /></AppSlot>
    <Spacer $w={258} />
    <WeatherIcon />
    <Lowered $by={3}>
      <Text $size={14} $left={6} $color="#fff" $width={38} $track={-0.5}>32°C</Text>
      <Text $size={14} $color="#fff" $width={90} $track={-0.5}>Partly sunny</Text>
    </Lowered>
    <TrayIcons />
    <Spacer $w={4} />
    <Stack $w={28}>
      <Text $size={12} $color="#fff" $track={-0.4}>ENG</Text>
      <Text $size={12} $color="#fff">IN</Text>
    </Stack>
    <Spacer $w={6} />
    <Stack $w={62}>
      <Text $size={12} $color="#fff" $track={-0.4}>3:07 AM</Text>
      <Text $size={12} $color="#fff" $track={-0.5}>10/10/2023</Text>
    </Stack>
    <Spacer $w={12} />
    <svg width="18" height="17" viewBox="0 0 18 17"><path d="M1 1h16v12h-5l-3 3-3-3H1z" fill="none" stroke="#fff" strokeWidth="1.2" /></svg>
    <Spacer />
    <svg width="5" height="40" viewBox="0 0 5 40"><path d="M.5 0v40" stroke="#555" /></svg>
  </Taskbar>
);

export default function App() {
  return (
    <Screen>
      <Global />
      <Browser />
      <SiteHeader />
      <Workbook />
      <SiteFooter />
      <WindowsTaskbar />
    </Screen>
  );
}
